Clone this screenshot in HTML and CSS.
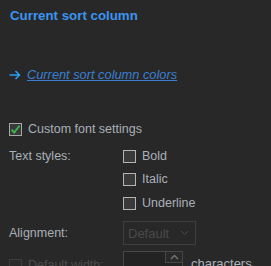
FILE: index.html
```html
<!DOCTYPE html>
<html>
<head>
<meta charset="utf-8">
<link rel="stylesheet" href="styles.css">
</head>
<body>
<div class="page">
  <div class="title">Current sort column</div>
  <div class="link-row">
    <svg class="arrow" width="12" height="10" viewBox="0 0 12 10"><path d="M0.5 5 H10.5 M6.5 1 L10.5 5 L6.5 9" fill="none" stroke="#2a9df4" stroke-width="1.6"/></svg>
    <a class="link" href="#">Current sort column colors</a>
  </div>
  <div class="row check-row">
    <span class="box checked">
      <svg width="11" height="11" viewBox="0 0 11 11"><path d="M1.6 5.6 L4.2 8.6 L9.5 1.8" fill="none" stroke="#3dbb4a" stroke-width="1.8"/></svg>
    </span>
    <span class="text">Custom font settings</span>
  </div>
  <div class="form-row r-bold">
    <div class="label">Text styles:</div>
    <div class="opt"><span class="box"></span><span class="text">Bold</span></div>
  </div>
  <div class="form-row r-italic">
    <div class="label"></div>
    <div class="opt"><span class="box"></span><span class="text">Italic</span></div>
  </div>
  <div class="form-row r-under">
    <div class="label"></div>
    <div class="opt"><span class="box"></span><span class="text">Underline</span></div>
  </div>
  <div class="form-row r-align">
    <div class="label">Alignment:</div>
    <div class="select">
      <span class="sel-text">Default</span>
      <svg class="chev" width="9" height="6" viewBox="0 0 9 6"><path d="M1 1 L4.5 4.5 L8 1" fill="none" stroke="#4a4a4a" stroke-width="1"/></svg>
    </div>
  </div>
  <div class="form-row r-width">
    <div class="label dim"><span class="box dimbox"></span><span>Default width:</span></div>
    <div class="width-row">
      <div class="num"><div class="spin"><svg width="9" height="6" viewBox="0 0 9 6"><path d="M1 5 L4.5 1.5 L8 5" fill="none" stroke="#777" stroke-width="1.3"/></svg></div></div>
      <span class="chars">characters</span>
    </div>
  </div>
</div>
</body>
</html>
```
FILE: styles.css
```css
html, body {
  margin: 0;
  padding: 0;
  background: #282828;
  width: 271px;
  height: 266px;
  overflow: hidden;
}
.page {
  padding: 7px 0 0 9px;
  font-family: "Liberation Sans", Arial, sans-serif;
  font-size: 12.5px;
  color: #a9b0b8;
  display: flex;
  flex-direction: column;
}
.title {
  font-weight: bold;
  font-size: 13.3px;
  color: #3a95f2;
  line-height: 18px;
  height: 18px;
  padding-left: 1px;
}
.link-row {
  margin-top: 42px;
  display: flex;
  align-items: center;
  height: 16px;
}
.arrow {
  margin-right: 6px;
  flex: none;
}
.link {
  color: #3a80d4;
  font-style: italic;
  font-size: 12.8px;
  text-decoration: underline;
  line-height: 16px;
}
.row, .opt {
  display: flex;
  align-items: center;
  height: 13px;
  line-height: 13px;
}
.check-row { margin-top: 40px; }
.box {
  width: 11px;
  height: 11px;
  border: 1px solid #b4b4b4;
  background: #3a3a3a;
  display: inline-flex;
  align-items: center;
  justify-content: center;
  margin-right: 6px;
  flex: none;
}
.box.checked { border-color: #a8a8a8; }
.form-row {
  display: grid;
  grid-template-columns: 114px 1fr;
  align-items: center;
}
.r-bold { margin-top: 14px; height: 13px; }
.r-italic { margin-top: 10px; height: 13px; }
.r-under { margin-top: 11px; height: 13px; }
.r-align { margin-top: 11px; height: 24px; }
.r-width { margin-top: 6px; height: 24px; align-items: start; }
.label { line-height: 13px; }
.select {
  height: 22px;
  border: 1px solid #3e3e3e;
  display: flex;
  align-items: center;
  justify-content: space-between;
  padding: 0 6px 0 4px;
  width: 61px;
  color: #4a4a4a;
  font-size: 13px;
}
.label.dim {
  color: #4c4c4c;
  display: flex;
  align-items: center;
  margin-top: 8px;
}
.dimbox {
  border-color: #3c3c3c;
  background: #2a2a2a;
}
.width-row {
  display: flex;
  align-items: flex-start;
}
.num {
  width: 58px;
  height: 22px;
  border: 1px solid #474747;
  background: #232323;
  display: flex;
  justify-content: flex-end;
  flex: none;
}
.spin {
  width: 16px;
  height: 10px;
  border-left: 1px solid #474747;
  border-bottom: 1px solid #474747;
  background: #2a2a2a;
  display: flex;
  align-items: center;
  justify-content: center;
}
.chars {
  margin-left: 8px;
  margin-top: 5px;
  font-size: 13px;
  color: #aab2ba;
}
```
